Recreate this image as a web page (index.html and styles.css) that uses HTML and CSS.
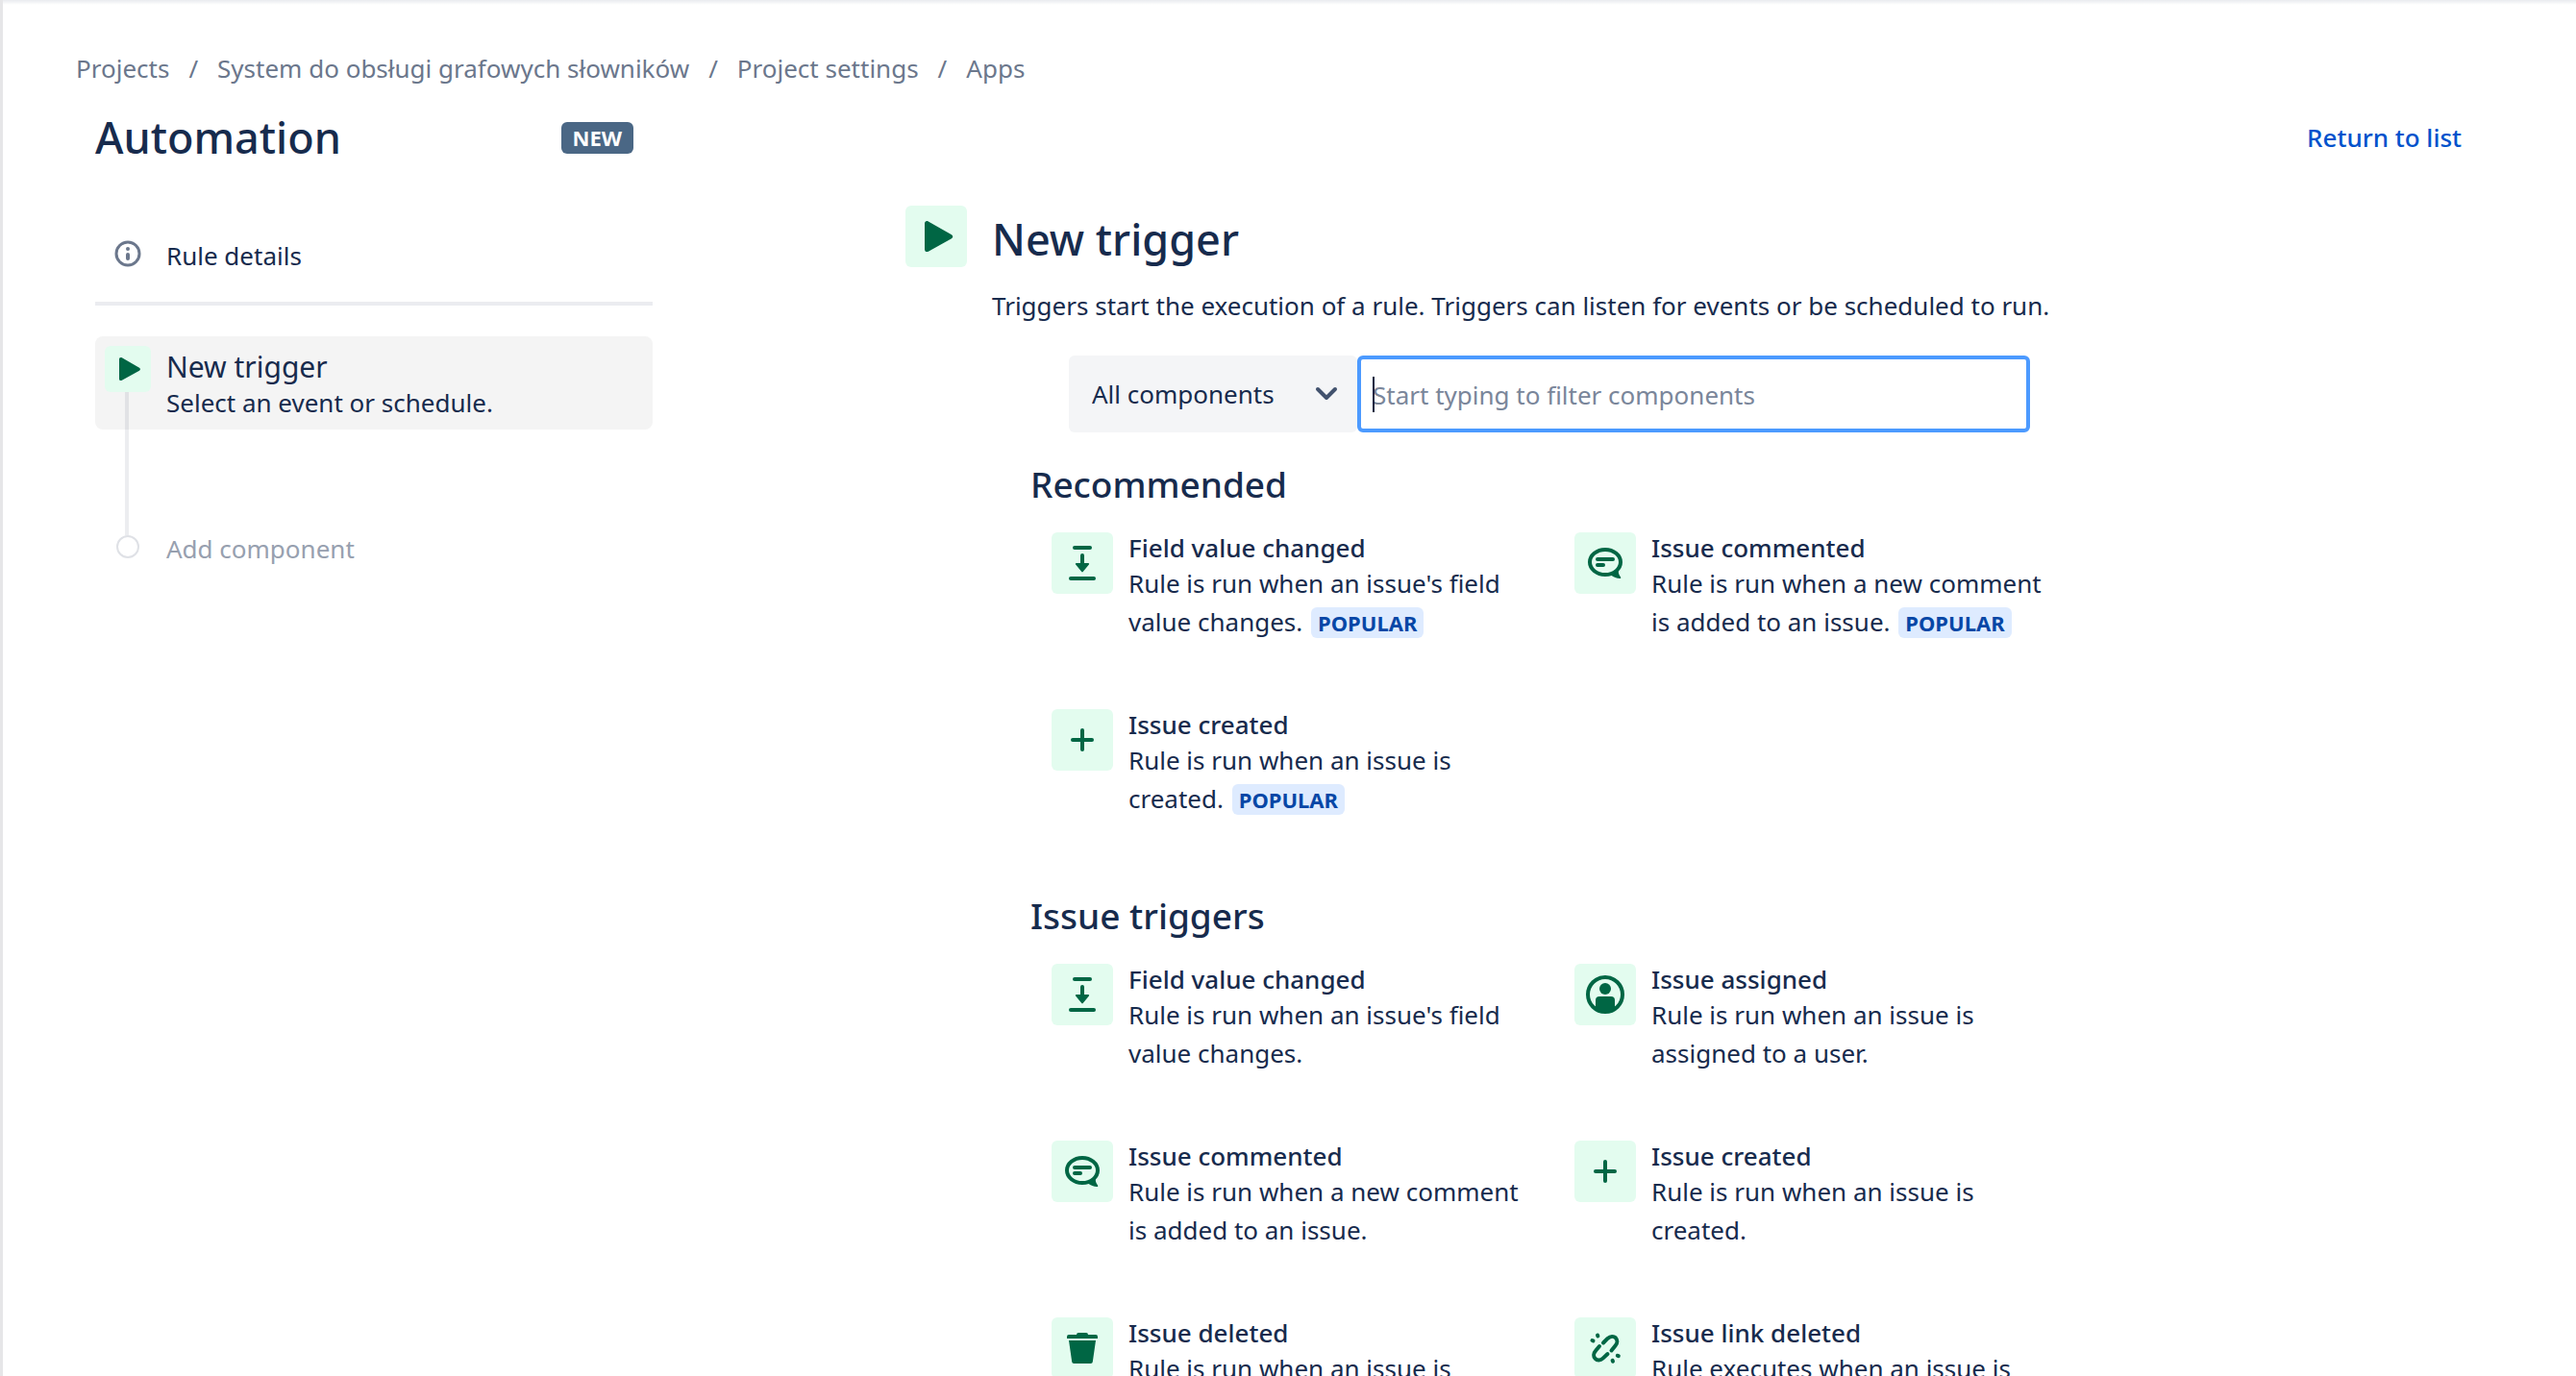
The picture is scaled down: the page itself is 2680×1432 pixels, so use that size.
FILE: index.html
```html
<!DOCTYPE html>
<html lang="en">
<head>
<meta charset="utf-8">
<title>Automation - New trigger</title>
<link rel="stylesheet" href="styles.css">
</head>
<body>
<svg class="sprite" aria-hidden="true">
  <symbol id="i-play" viewBox="0 0 64 64"><path d="M20 18.500c0-2.300 2-3.200 3.800-2.100L48 30.200c1.700 1.100 1.700 3 0 4.100L23.800 47.700C22 48.700 20 47.800 20 45.500z"/></symbol>
  <symbol id="i-field" viewBox="0 0 64 64"><rect x="22" y="14" width="20" height="4" rx="2"/><rect x="18" y="46" width="28" height="4" rx="2"/><path d="M30 24a2 2 0 0 1 4 0v8h4.200c.9 0 1.200.8.700 1.400l-6.200 7.600c-.4.500-1 .5-1.400 0l-6.200-7.600c-.5-.6-.2-1.400.7-1.400H30z"/></symbol>
  <symbol id="i-plus" viewBox="0 0 64 64"><rect x="30" y="20" width="4" height="24" rx="2"/><rect x="20" y="30" width="24" height="4" rx="2"/></symbol>
  <symbol id="i-comment" viewBox="0 0 64 64"><ellipse cx="32" cy="31" rx="16" ry="13" fill="none" stroke="currentColor" stroke-width="4"/><path d="M38 44.500L46 38.500c-.6 3 0 5.500 2 8 .6.900.2 1.600-.8 1.500-3.200-.3-6.400-1.300-9.200-3.500z"/><rect x="22" y="26" width="20" height="4" rx="2"/><rect x="22" y="32" width="10" height="4" rx="2"/></symbol>
  <symbol id="i-person" viewBox="0 0 64 64"><circle cx="32" cy="32" r="18" fill="none" stroke="currentColor" stroke-width="4"/><circle cx="32" cy="26" r="6"/><path d="M22 38a4 4 0 0 1 4-4h12a4 4 0 0 1 4 4v9c-3 2.500-6 3.500-10 3.500S25 49.500 22 47z"/></symbol>
  <symbol id="i-trash" viewBox="0 0 64 64"><path d="M16 20a2 2 0 0 1 2-2h8a2 2 0 0 1 2-2h8a2 2 0 0 1 2 2h8a2 2 0 0 1 2 2v2H16zM18 24h28l-3.200 22.200A2 2 0 0 1 40.800 48H23.200a2 2 0 0 1-2-1.800z"/></symbol>
  <symbol id="i-unlink" viewBox="0 0 64 64"><g fill="none" stroke="currentColor" stroke-width="4" stroke-linecap="round"><path d="M30 26.500l4.500-4.600c3-2.600 6.500-2.400 8.400-.6 2 2 2 5.400-.2 8L38.500 34.500"/><path d="M26 30l-4 4.800c-2.400 2.600-2.400 6-.4 8 2 2.200 5.400 2.200 8-.2L34.500 38"/><path d="M24 18.500l.4 1M18.500 24l1 .4M39.600 44.800l.4 1M44.800 39.800l1 .4"/></g></symbol>
</svg>

<div class="page">
  <nav class="breadcrumbs" aria-label="Breadcrumbs">
    <a href="#">Projects</a><span>/</span><a href="#">System do obsługi grafowych słowników</a><span>/</span><a href="#">Project settings</a><span>/</span><a href="#">Apps</a>
  </nav>

  <header class="page-header">
    <div class="title">
      <h1>Automation</h1>
      <span class="badge-new">NEW</span>
    </div>
    <a class="return" href="#">Return to list</a>
  </header>

  <div class="columns">
    <aside class="sidebar">
      <a class="rule-details" href="#">
        <svg class="info" viewBox="0 0 28 28" aria-hidden="true"><circle cx="14" cy="14" r="12" fill="none" stroke="currentColor" stroke-width="3"/><circle cx="14" cy="9" r="2"/><rect x="12" y="13" width="4" height="8" rx="2"/></svg>
        Rule details
      </a>
      <div class="step">
        <span class="tile tile-small"><svg aria-hidden="true"><use href="#i-play"/></svg></span>
        <div class="step-text">
          <h2>New trigger</h2>
          <p>Select an event or schedule.</p>
        </div>
      </div>
      <div class="add"><span class="dot"></span>Add component</div>
    </aside>

    <main class="panel">
      <span class="tile"><svg aria-hidden="true"><use href="#i-play"/></svg></span>
      <div class="panel-body">
        <h1>New trigger</h1>
        <p class="lead">Triggers start the execution of a rule. Triggers can listen for events or be scheduled to run.</p>

        <form class="filter">
          <div class="select">
            <select aria-label="Component type"><option>All components</option></select>
            <svg viewBox="0 0 24 16" aria-hidden="true"><path d="M3 3l9 9 9-9"/></svg>
          </div>
          <div class="search">
            <input type="text" aria-label="Filter components" placeholder="Start typing to filter components">
          </div>
        </form>

        <section>
          <h2>Recommended</h2>
          <ul class="cards">
            <li><span class="tile"><svg aria-hidden="true"><use href="#i-field"/></svg></span><div><h3>Field value changed</h3><p>Rule is run when an issue's field value changes. <span class="popular">POPULAR</span></p></div></li>
            <li><span class="tile"><svg aria-hidden="true"><use href="#i-comment"/></svg></span><div><h3>Issue commented</h3><p>Rule is run when a new comment is added to an issue. <span class="popular">POPULAR</span></p></div></li>
            <li><span class="tile"><svg aria-hidden="true"><use href="#i-plus"/></svg></span><div><h3>Issue created</h3><p>Rule is run when an issue is created. <span class="popular">POPULAR</span></p></div></li>
          </ul>
        </section>

        <section>
          <h2>Issue triggers</h2>
          <ul class="cards">
            <li><span class="tile"><svg aria-hidden="true"><use href="#i-field"/></svg></span><div><h3>Field value changed</h3><p>Rule is run when an issue's field value changes.</p></div></li>
            <li><span class="tile"><svg aria-hidden="true"><use href="#i-person"/></svg></span><div><h3>Issue assigned</h3><p>Rule is run when an issue is assigned to a user.</p></div></li>
            <li><span class="tile"><svg aria-hidden="true"><use href="#i-comment"/></svg></span><div><h3>Issue commented</h3><p>Rule is run when a new comment is added to an issue.</p></div></li>
            <li><span class="tile"><svg aria-hidden="true"><use href="#i-plus"/></svg></span><div><h3>Issue created</h3><p>Rule is run when an issue is created.</p></div></li>
            <li><span class="tile"><svg aria-hidden="true"><use href="#i-trash"/></svg></span><div><h3>Issue deleted</h3><p>Rule is run when an issue is deleted.</p></div></li>
            <li><span class="tile"><svg aria-hidden="true"><use href="#i-unlink"/></svg></span><div><h3>Issue link deleted</h3><p>Rule executes when an issue is unlinked.</p></div></li>
          </ul>
        </section>
      </div>
    </main>
  </div>
</div>
</body>
</html>
```
FILE: styles.css
```css
*, *::before, *::after { box-sizing: border-box; }

body {
  margin: 0;
  background: #fff;
  color: #172b4d;
  font: 400 26px/40px "Noto Sans", sans-serif;
}

h1, h2, h3, p, ul { margin: 0; padding: 0; }
h1, h2, h3 { font-weight: 500; }
a { color: inherit; text-decoration: none; }
svg { fill: currentColor; }
.sprite { display: none; }

.page {
  height: 100vh;
  overflow-y: auto;
  scrollbar-width: none;
  padding: 51px 119px 0 96px;
  border-left: 3px solid #e6e6e8;
  background: linear-gradient(#e9ebef, #fff) top / 100% 5px no-repeat;
}

/* Breadcrumbs */
.breadcrumbs {
  display: flex;
  gap: 20px;
  margin-left: -20px;
  color: #6b778c;
}

/* Page header */
.page-header {
  display: flex;
  align-items: center;
  justify-content: space-between;
  margin-top: 26px;
}
.page-header h1 { font-size: 45px; line-height: 52px; }
.title {
  display: flex;
  align-items: center;
  justify-content: space-between;
  width: 580px;
  padding-right: 20px;
}
.badge-new {
  padding: 0 12px;
  border-radius: 6px;
  background: #4a6785;
  color: #fff;
  font-size: 22px;
  font-weight: 700;
  line-height: 33px;
}
.return { color: #0052cc; font-weight: 500; }

.columns {
  display: grid;
  grid-template-columns: 580px minmax(0, 1fr);
}

/* Icon tile */
.tile {
  flex: none;
  width: 64px;
  height: 64px;
  border-radius: 6px;
  background: #e3fcef;
  color: #006644;
}
.tile svg { display: block; width: 100%; height: 100%; }
.tile-small { width: 48px; height: 48px; }

/* Sidebar */
.sidebar { padding-top: 77px; }
.rule-details {
  display: flex;
  gap: 26px;
  padding: 0 20px 28px;
  border-bottom: 4px solid #ebecf0;
}
.info { width: 28px; height: 28px; margin-top: 4px; color: #6b778c; }
.step {
  position: relative;
  display: flex;
  gap: 16px;
  margin-top: 32px;
  padding: 10px 10px 10px;
  border-radius: 8px;
  background: #f4f4f4;
}
.step::after {
  content: "";
  position: absolute;
  top: 58px;
  left: 31px;
  width: 4px;
  height: 149px;
  background: rgba(9, 30, 66, 0.08);
}
.step-text { padding-top: 3px; }
.step h2 { font-size: 30px; font-weight: 400; line-height: 38px; }
.step p { line-height: 36px; }
.add {
  display: flex;
  gap: 28px;
  margin-top: 104px;
  padding-left: 22px;
  color: #97a0af;
}
.dot {
  width: 24px;
  height: 24px;
  margin-top: 6px;
  border: 2px solid #dfe1e6;
  border-radius: 50%;
}

/* Trigger picker */
.panel {
  display: flex;
  gap: 26px;
  width: 100%;
  max-width: 1356px;
  margin: 45px auto 0;
}
.panel-body { flex: 1; min-width: 0; padding: 7px 116px 80px 0; }
.panel-body h1 { font-size: 45px; line-height: 56px; }
.lead { margin-top: 21px; }

.filter {
  display: flex;
  width: 1000px;
  height: 80px;
  margin: 32px 0 0 80px;
}
.select { position: relative; width: 300px; }
.select select {
  appearance: none;
  width: 100%;
  height: 100%;
  padding: 0 60px 0 24px;
  border: 0;
  border-radius: 6px;
  background: #f4f5f7;
  color: inherit;
  font: inherit;
}
.select svg {
  position: absolute;
  top: 32px;
  right: 20px;
  width: 24px;
  height: 16px;
  fill: none;
  stroke: #42526e;
  stroke-width: 4;
  stroke-linecap: round;
  stroke-linejoin: round;
  pointer-events: none;
}
.search { position: relative; flex: 1; }
.search input {
  width: 100%;
  height: 100%;
  padding: 2px 12px 0;
  border: 4px solid #4c9aff;
  border-radius: 6px;
  outline: 0;
  background: #fff;
  color: inherit;
  font: inherit;
  caret-color: transparent;
}
.search input::placeholder { color: #7a869a; opacity: 1; }
/* text cursor */
.search::after {
  content: "";
  position: absolute;
  top: 22px;
  left: 16px;
  width: 2px;
  height: 37px;
  background: #091e42;
}

section { margin: 30px 0 0 40px; }
section + section { margin-top: 78px; }
section h2 { font-size: 37px; line-height: 48px; }

.cards {
  display: grid;
  grid-template-columns: repeat(2, minmax(0, 1fr));
  row-gap: 71px;
  margin: 26px 0 0 22px;
  list-style: none;
}
.cards li { display: flex; gap: 16px; padding-right: 48px; }
.cards h3 { font-size: 26px; line-height: 33px; }
.popular {
  display: inline-block;
  margin-left: 2px;
  padding: 0 7px;
  border-radius: 6px;
  background: #deebff;
  color: #0747a6;
  font-size: 22px;
  font-weight: 700;
  line-height: 32px;
}
```
